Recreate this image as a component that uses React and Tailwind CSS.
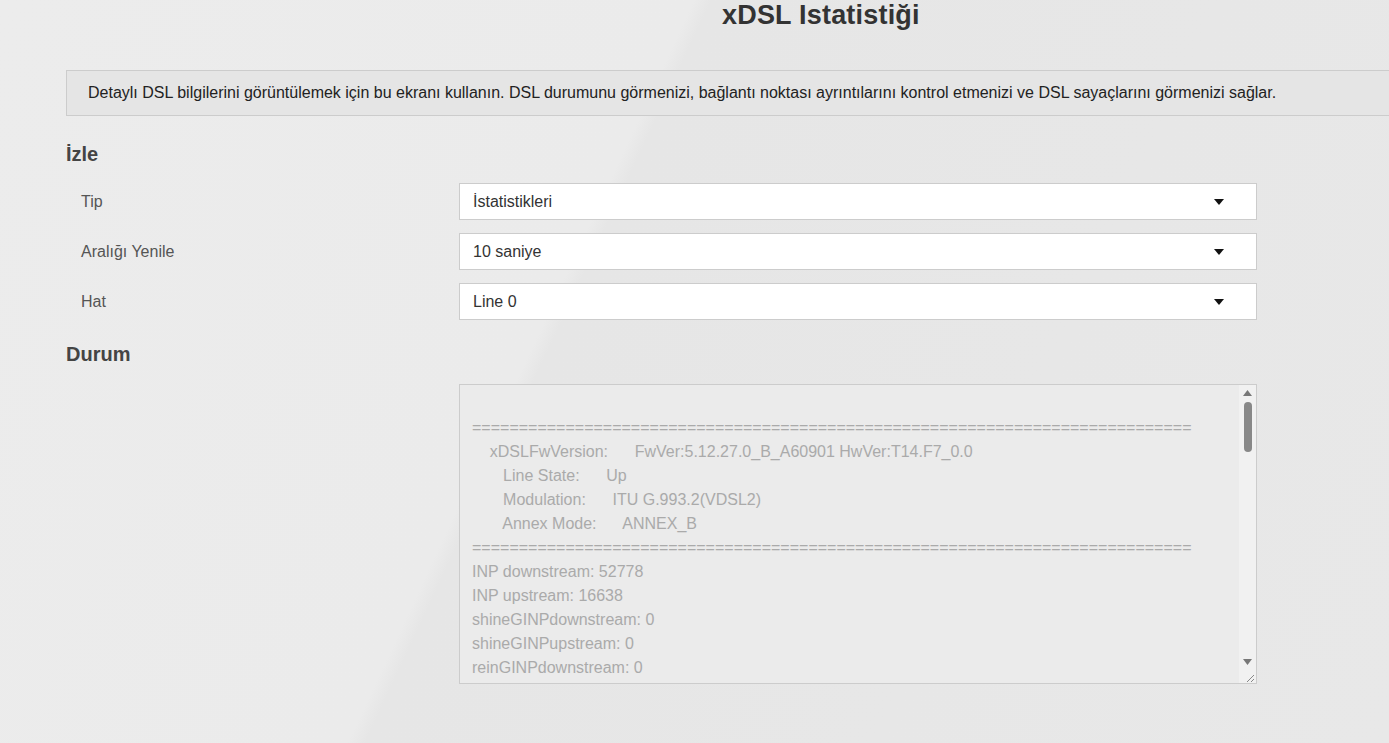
export default function App() {
  const eq = "=".repeat(77);
  const lines = [
    "",
    eq,
    "    xDSLFwVersion:      FwVer:5.12.27.0_B_A60901 HwVer:T14.F7_0.0",
    "       Line State:      Up",
    "       Modulation:      ITU G.993.2(VDSL2)",
    "       Annex Mode:      ANNEX_B",
    eq,
    "INP downstream: 52778",
    "INP upstream: 16638",
    "shineGINPdownstream: 0",
    "shineGINPupstream: 0",
    "reinGINPdownstream: 0",
  ];
  const Select = ({ v }) => (
    <div className="w-[798px] h-[37px] bg-white border border-[#ccc] flex items-center justify-between pl-[13px] pr-[32px] text-[16px] text-[#333]">
      <span>{v}</span>
      <svg width="10" height="6" viewBox="0 0 10 6"><path d="M0 0h10L5 6z" fill="#111" /></svg>
    </div>
  );
  const rows = [["Tip", "İstatistikleri"], ["Aralığı Yenile", "10 saniye"], ["Hat", "Line 0"]];
  return (
    <div className="w-[1389px] h-[743px] overflow-hidden bg-[linear-gradient(115deg,#ececec_0%,#ebebeb_40%,#e6e6e6_41%,#e8e8e8_100%)] text-[#333]" style={{ fontFamily: '"Liberation Sans", Arial, sans-serif' }}>
      <h1 className="text-[27px] font-bold text-[#333] leading-[30px] pl-[722px] pt-[0px] tracking-[0.2px]">xDSL Istatistiği</h1>
      <div className="ml-[66px] mt-[40px] h-[46px] bg-[#e5e5e5] border border-[#ccc] border-r-0 flex items-center pl-[21px] text-[16px] text-[#222]">
        Detaylı DSL bilgilerini görüntülemek için bu ekranı kullanın. DSL durumunu görmenizi, bağlantı noktası ayrıntılarını kontrol etmenizi ve DSL sayaçlarını görmenizi sağlar.
      </div>
      <div className="ml-[66px] mt-[26px] text-[20px] font-bold text-[#444] leading-[24px]">İzle</div>
      <div className="mt-[17px] flex flex-col gap-[13px]">
        {rows.map(([l, v]) => (
          <div key={l} className="flex items-center">
            <div className="w-[459px] pl-[81px] text-[16px] text-[#555]">{l}</div>
            <Select v={v} />
          </div>
        ))}
      </div>
      <div className="ml-[66px] mt-[22px] text-[20px] font-bold text-[#444] leading-[24px]">Durum</div>
      <div className="ml-[459px] mt-[18px] w-[798px] h-[300px] border border-[#ccc] bg-[#ebebeb] flex">
        <div className="flex-1 pl-[12px] pt-[7px] overflow-hidden">
          {lines.map((t, i) => (
            <div key={i} className="h-[24px] leading-[24px] text-[16px] text-[#aaa] whitespace-pre">{t || "\u00a0"}</div>
          ))}
        </div>
        <div className="w-[17px] bg-[#f1f1f1] flex flex-col items-center relative">
          <svg className="mt-[5px]" width="9" height="6" viewBox="0 0 9 6"><path d="M0 6h9L4.5 0z" fill="#777" /></svg>
          <div className="mt-[6px] w-[8px] h-[50px] rounded-full bg-[#888]" />
          <div className="flex-1" />
          <svg className="mb-[18px]" width="9" height="6" viewBox="0 0 9 6"><path d="M0 0h9L4.5 6z" fill="#777" /></svg>
          <svg className="absolute bottom-[1px] right-[2px]" width="8" height="8" viewBox="0 0 8 8"><path d="M1 8L8 1M5 8L8 5" stroke="#888" /></svg>
        </div>
      </div>
    </div>
  );
}
